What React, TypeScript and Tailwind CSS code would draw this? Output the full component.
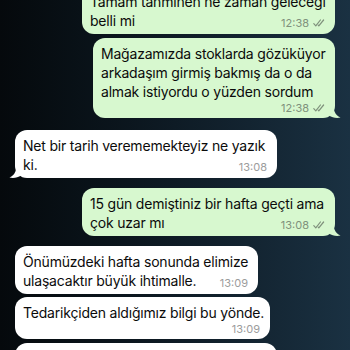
import React from "react"

type Msg = {
  out: boolean
  lines: string[]
  time: string
  inline: boolean
  tail: boolean
  width: string
  gap: string
}

const messages: Msg[] = [
  { out: true, lines: ["Tamam tahminen ne zaman geleceği", "belli mi"], time: "12:38", inline: true, tail: false, width: "w-[253px]", gap: "-mt-[14px]" },
  { out: true, lines: ["Mağazamızda stoklarda gözüküyor", "arkadaşım girmiş bakmış da o da", "almak istiyordu o yüzden sordum"], time: "12:38", inline: false, tail: true, width: "w-[242px]", gap: "mt-[4px]" },
  { out: false, lines: ["Net bir tarih verememekteyiz ne yazık", "ki."], time: "13:08", inline: true, tail: true, width: "w-[262px]", gap: "mt-[12px]" },
  { out: true, lines: ["15 gün demiştiniz bir hafta geçti ama", "çok uzar mı"], time: "13:08", inline: true, tail: true, width: "w-[253px]", gap: "mt-[10px]" },
  { out: false, lines: ["Önümüzdeki hafta sonunda elimize", "ulaşacaktır büyük ihtimalle."], time: "13:09", inline: true, tail: false, width: "w-[243px]", gap: "mt-[10px]" },
  { out: false, lines: ["Tedarikçiden aldığımız bilgi bu yönde."], time: "13:09", inline: false, tail: false, width: "w-[255px]", gap: "mt-[3px]" },
  { out: false, lines: ["Başka bir konuda yardımcı olabilir miyim?"], time: "13:10", inline: false, tail: true, width: "w-[262px]", gap: "mt-[4px]" },
]

function Ticks() {
  return (
    <svg width="12" height="8" viewBox="0 0 12 8" fill="none" stroke="#7f917c" strokeWidth="1.2" strokeLinecap="round" strokeLinejoin="round">
      <path d="M0.8 4.6 L2.8 6.8 L7.4 1" />
      <path d="M5.2 6.2 L5.8 6.8 L10.6 1" />
    </svg>
  )
}

function Time({ out, time }: { out: boolean; time: string }) {
  return (
    <span className={`flex items-center gap-[4px] text-[11px] leading-[12px] tracking-normal ${out ? "text-[#7f917c]" : "text-[#9c9c9c]"}`}>
      {time}
      {out && <Ticks />}
    </span>
  )
}

function Tail({ out }: { out: boolean }) {
  if (out) {
    return (
      <svg className="absolute -right-[6px] bottom-0" width="12" height="16" viewBox="0 0 12 16">
        <path d="M0 0 L4 0 C4 8 6 13 11.5 15.6 C7 16.4 3 15.5 0 13.5 Z" fill="#d7f8cf" />
      </svg>
    )
  }
  return (
    <svg className="absolute -left-[6px] bottom-0" width="12" height="16" viewBox="0 0 12 16">
      <path d="M12 0 L8 0 C8 8 6 13 0.5 15.6 C5 16.4 9 15.5 12 13.5 Z" fill="#ffffff" />
    </svg>
  )
}

function Bubble({ m }: { m: Msg }) {
  const last = m.lines[m.lines.length - 1]
  const rest = m.lines.slice(0, -1)
  return (
    <div
      className={`relative ${m.width} ${m.gap} rounded-[12px] pt-[6px] pb-[4px] pl-[8px] pr-[8px] ${
        m.out ? "ml-auto mr-[15px] bg-[#d7f8cf]" : "ml-[15px] bg-white"
      }`}
    >
      <div className="text-[14px] leading-[19px] text-[#0b0b0b] whitespace-nowrap tracking-[-0.2px]">
        {rest.map((l, i) => (
          <div key={i}>{l}</div>
        ))}
        {m.inline ? (
          <div className="flex items-end justify-between">
            <span>{last}</span>
            <span className="mb-[1px] pr-[2px]">
              <Time out={m.out} time={m.time} />
            </span>
          </div>
        ) : (
          <div>{last}</div>
        )}
      </div>
      {!m.inline && (
        <div className="flex justify-end h-[13px] items-center pr-[2px]">
          <Time out={m.out} time={m.time} />
        </div>
      )}
      {m.tail && <Tail out={m.out} />}
    </div>
  )
}

export default function App() {
  return (
    <div
      className="w-[350px] h-[350px] overflow-hidden bg-gradient-to-r from-[#05090c] via-[#0e1b25] to-[#1a3142]"
      style={{ fontFamily: "Inter, 'Noto Sans', sans-serif" }}
    >
      <div className="flex flex-col">
        {messages.map((m, i) => (
          <Bubble key={i} m={m} />
        ))}
      </div>
    </div>
  )
}
